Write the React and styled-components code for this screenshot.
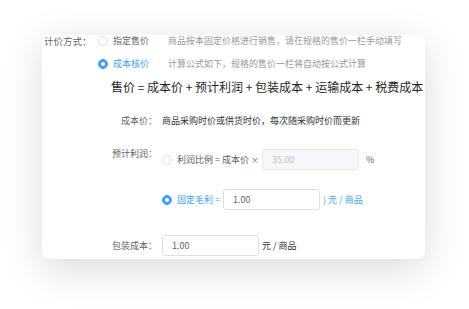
import React from 'react';
import styled, { createGlobalStyle } from 'styled-components';

const GlobalStyle = createGlobalStyle`
  html, body {
    margin: 0;
    padding: 0;
    background: #fff;
  }
  body {
    font-family: "Noto Sans CJK SC", "Noto Sans", sans-serif;
  }
  * {
    box-sizing: border-box;
  }
`;

const Page = styled.div`
  width: 469px;
  height: 309px;
  overflow: hidden;
  padding: 35px 0 0 42px;
`;

const Card = styled.div`
  width: 383px;
  height: 224px;
  background: #fff;
  border-radius: 2px 8px 8px 8px;
  box-shadow: 0 10px 40px rgba(0, 0, 0, 0.15);
`;

const ModeBlock = styled.div`
  display: flex;
  padding-left: 2px;
`;

const ModeLabel = styled.div`
  width: 54px;
  font-size: 9.5px;
  line-height: 12px;
  color: #606266;
  white-space: nowrap;
`;

const Options = styled.div`
  display: flex;
  flex-direction: column;
  gap: 11px;
`;

const Option = styled.div`
  display: flex;
  align-items: center;
  height: ${p => p.$height || 12}px;
  white-space: nowrap;
`;

const Radio = styled.span`
  display: flex;
  align-items: center;
  justify-content: center;
  width: 10px;
  height: 10px;
  flex-shrink: 0;
  border-radius: 50%;
  border: 1px solid ${p => (p.$checked ? '#409eff' : '#dcdfe6')};
  background: ${p => (p.$checked ? '#409eff' : '#fff')};

  &::after {
    content: '';
    width: 4px;
    height: 4px;
    border-radius: 50%;
    background: #fff;
  }
`;

const OptionText = styled.span`
  margin-left: 5px;
  width: ${p => (p.$width ? `${p.$width}px` : 'auto')};
  font-size: 9px;
  line-height: 12px;
  color: ${p => (p.$active ? '#409eff' : '#606266')};
`;

const Times = styled.span`
  font-size: 8px;
`;

const Desc = styled.span`
  font-size: 9px;
  line-height: 12px;
  color: ${p => (p.$dark ? '#303133' : '#999')};
  white-space: nowrap;
`;

const Formula = styled.div`
  margin: 9px 0 0 69px;
  font-size: 12px;
  line-height: 16px;
  color: #1f1f1f;
  white-space: nowrap;
`;

const FormItem = styled.div`
  display: flex;
  align-items: ${p => (p.$top ? 'flex-start' : 'center')};
  margin-top: ${p => p.$gap}px;
`;

const FormLabel = styled.div`
  width: 115px;
  flex-shrink: 0;
  text-align: right;
  font-size: 9px;
  line-height: 12px;
  color: #606266;
  white-space: nowrap;
`;

const FormContent = styled.div`
  display: flex;
  flex-direction: column;
  gap: 19px;
  margin-left: 5px;
  margin-top: ${p => p.$offset || 0}px;
`;

const Inline = styled.div`
  display: flex;
  align-items: center;
  white-space: nowrap;
`;

const Input = styled.input`
  width: 97px;
  height: 21px;
  margin: 0 0 0 ${p => p.$left || 0}px;
  padding: 0 9px;
  border: 1px solid ${p => (p.disabled ? '#e4e7ed' : '#dcdfe6')};
  border-radius: 3px;
  background: ${p => (p.disabled ? '#f5f7fa' : '#fff')};
  font-family: inherit;
  font-size: 9px;
  color: #606266;
  outline: none;

  &::placeholder {
    color: #c0c4cc;
  }
`;

const Unit = styled.span`
  margin-left: ${p => p.$left}px;
  font-size: 9px;
  line-height: 12px;
  color: ${p => (p.$blue ? '#409eff' : p.$gray ? '#606266' : '#303133')};
`;

export default function App() {
  return (
    <>
      <GlobalStyle />
      <Page>
        <Card>
          <ModeBlock>
            <ModeLabel>计价方式：</ModeLabel>
            <Options>
              <Option>
                <Radio />
                <OptionText $width={55}>指定售价</OptionText>
                <Desc>商品按本固定价格进行销售，请在规格的售价一栏手动填写</Desc>
              </Option>
              <Option>
                <Radio $checked />
                <OptionText $width={55} $active>成本核价</OptionText>
                <Desc>计算公式如下，规格的售价一栏将自动按公式计算</Desc>
              </Option>
            </Options>
          </ModeBlock>

          <Formula>售价 = 成本价 + 预计利润 + 包装成本 + 运输成本 + 税费成本</Formula>

          <FormItem $gap={20}>
            <FormLabel>成本价：</FormLabel>
            <FormContent>
              <Desc $dark>商品采购时价或供货时价，每次随采购时价而更新</Desc>
            </FormContent>
          </FormItem>

          <FormItem $gap={21} $top>
            <FormLabel>预计利润：</FormLabel>
            <FormContent $offset={1}>
              <Option $height={21}>
                <Radio />
                <OptionText>利润比例 = 成本价 <Times>×</Times></OptionText>
                <Input $left={3} disabled placeholder="35.00" />
                <Unit $left={7} $gray>%</Unit>
              </Option>
              <Option $height={21}>
                <Radio $checked />
                <OptionText $active>固定毛利 =</OptionText>
                <Input $left={3} defaultValue="1.00" readOnly />
                <Unit $left={3} $blue>) 元 / 商品</Unit>
              </Option>
            </FormContent>
          </FormItem>

          <FormItem $gap={25}>
            <FormLabel>包装成本：</FormLabel>
            <FormContent>
              <Inline>
                <Input defaultValue="1.00" readOnly />
                <Unit $left={3}>元 / 商品</Unit>
              </Inline>
            </FormContent>
          </FormItem>
        </Card>
      </Page>
    </>
  );
}
